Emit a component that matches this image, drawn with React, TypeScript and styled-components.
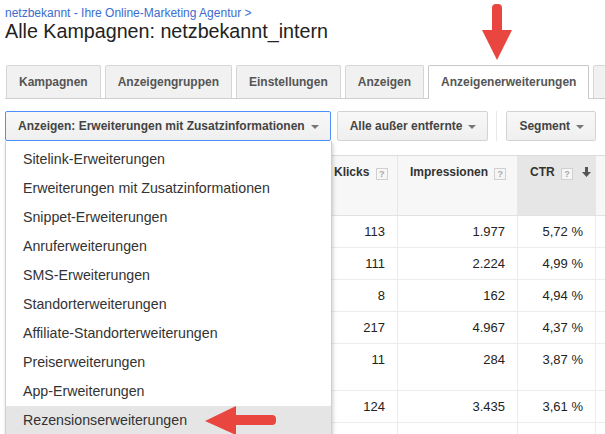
import React from "react";
import styled, { createGlobalStyle } from "styled-components";

const GlobalStyle = createGlobalStyle`
  html, body {
    margin: 0;
    padding: 0;
    background: #fff;
    overflow: hidden;
  }
  body {
    font-family: "Liberation Sans", Arial, sans-serif;
    color: #222;
  }
`;

const tabs = [
  "Kampagnen",
  "Anzeigengruppen",
  "Einstellungen",
  "Anzeigen",
  "Anzeigenerweiterungen",
];

const menuItems = [
  "Sitelink-Erweiterungen",
  "Erweiterungen mit Zusatzinformationen",
  "Snippet-Erweiterungen",
  "Anruferweiterungen",
  "SMS-Erweiterungen",
  "Standorterweiterungen",
  "Affiliate-Standorterweiterungen",
  "Preiserweiterungen",
  "App-Erweiterungen",
  "Rezensionserweiterungen",
];

type Row = { clicks: string; impressions: string; ctr: string; tall?: boolean };

const rows: Row[] = [
  { clicks: "113", impressions: "1.977", ctr: "5,72 %" },
  { clicks: "111", impressions: "2.224", ctr: "4,99 %" },
  { clicks: "8", impressions: "162", ctr: "4,94 %" },
  { clicks: "217", impressions: "4.967", ctr: "4,37 %" },
  { clicks: "11", impressions: "284", ctr: "3,87 %", tall: true },
  { clicks: "124", impressions: "3.435", ctr: "3,61 %" },
  { clicks: "84", impressions: "2.585", ctr: "3,33 %" },
];

const App = () => {
  return (
    <Page>
      <GlobalStyle />
      <Breadcrumb href="#">netzbekannt - Ihre Online-Marketing Agentur &gt;</Breadcrumb>
      <Title>Alle Kampagnen: netzbekannt_intern</Title>

      <DownArrow width="30" height="58" viewBox="0 0 30 58">
        <rect x="10" y="1" width="10" height="33" rx="4" fill="#e8463f" />
        <path d="M0 27 L30 27 L15 57 Z" fill="#e8463f" />
      </DownArrow>

      <TabBar>
        {tabs.map((t) => (
          <Tab key={t} $active={t === "Anzeigenerweiterungen"}>
            {t}
          </Tab>
        ))}
        <Tab $active={false} />
      </TabBar>

      <Toolbar>
        <DropButton $focused $gapRight={6}>
          Anzeigen: Erweiterungen mit Zusatzinformationen <Caret />
        </DropButton>
        <DropButton $gapRight={0}>
          Alle außer entfernte <Caret />
        </DropButton>
        <Divider />
        <DropButton $gapRight={0}>
          Segment <Caret />
        </DropButton>

        <Menu>
          {menuItems.map((m) => (
            <MenuItem key={m} $hover={m === "Rezensionserweiterungen"}>
              {m}
            </MenuItem>
          ))}
        </Menu>
      </Toolbar>

      <StatsTable>
        <colgroup>
          <col style={{ width: 316 }} />
          <col style={{ width: 76 }} />
          <col style={{ width: 120 }} />
          <col style={{ width: 78 }} />
          <col style={{ width: 80 }} />
        </colgroup>
        <thead>
          <tr>
            <HeadCell />
            <HeadCell>
              Klicks <Help>?</Help>
            </HeadCell>
            <HeadCell>
              Impressionen <Help>?</Help>
            </HeadCell>
            <HeadCell $sorted>
              CTR <Help>?</Help>
              <SortIcon width="9" height="10" viewBox="0 0 9 10">
                <path d="M3 0h3v5h3L4.5 10 0 5h3z" fill="#555" />
              </SortIcon>
            </HeadCell>
            <HeadCell />
          </tr>
        </thead>
        <tbody>
          {rows.map((r, i) => (
            <tr key={i}>
              <Cell $tall={r.tall} />
              <Cell $tall={r.tall}>{r.clicks}</Cell>
              <Cell $tall={r.tall}>{r.impressions}</Cell>
              <Cell $tall={r.tall}>{r.ctr}</Cell>
              <Cell $tall={r.tall} />
            </tr>
          ))}
        </tbody>
      </StatsTable>

      <LeftArrow width="72" height="30" viewBox="0 0 72 30">
        <rect x="24" y="10" width="47" height="10" rx="4" fill="#e8463f" />
        <path d="M0 16 L31 1 L31 30 Z" fill="#e8463f" />
      </LeftArrow>
    </Page>
  );
};

const Page = styled.div`
  position: relative;
  padding: 6px 0 0 5px;
  width: 700px;
`;

const Breadcrumb = styled.a`
  display: block;
  font-size: 12px;
  line-height: 14px;
  color: #3b6ccf;
  text-decoration: none;
`;

const Title = styled.h1`
  margin: 0;
  font-size: 19.7px;
  line-height: 22px;
  font-weight: 400;
  color: #222;
`;

const DownArrow = styled.svg`
  position: absolute;
  left: 482px;
  top: 3px;
  z-index: 5;
`;

const LeftArrow = styled.svg`
  position: absolute;
  left: 205px;
  top: 405px;
  z-index: 5;
`;

const TabBar = styled.div`
  display: flex;
  align-items: flex-end;
  gap: 4px;
  margin-top: 23px;
  padding-left: 1px;
  height: 33px;
  border-bottom: 1px solid #cfcfcf;
`;

const Tab = styled.div<{ $active: boolean }>`
  box-sizing: border-box;
  height: ${(p) => (p.$active ? 34 : 33)}px;
  min-width: 30px;
  margin-bottom: ${(p) => (p.$active ? -1 : 0)}px;
  display: flex;
  align-items: center;
  padding: 0 12px 1px;
  border: 1px solid ${(p) => (p.$active ? "#c8c8c8" : "#d6d6d6")};
  border-bottom: none;
  border-radius: 2px 2px 0 0;
  background: ${(p) => (p.$active ? "#fff" : "#f1f1f1")};
  font-size: 12px;
  font-weight: 700;
  color: #555;
  white-space: nowrap;
`;

const Toolbar = styled.div`
  position: relative;
  display: flex;
  align-items: center;
  margin-top: 12px;
  height: 30px;
`;

const DropButton = styled.div<{ $focused?: boolean; $gapRight: number }>`
  box-sizing: border-box;
  height: 30px;
  display: flex;
  align-items: center;
  gap: 6px;
  padding: 0 11px 0 12px;
  margin-right: ${(p) => p.$gapRight}px;
  border: 1px solid ${(p) => (p.$focused ? "#4d90fe" : "#d3d3d3")};
  border-radius: 2px;
  background: linear-gradient(#f8f8f8, #efefef);
  font-size: 12px;
  font-weight: 700;
  color: #444;
  white-space: nowrap;
`;

const Caret = styled.span`
  width: 0;
  height: 0;
  border-left: 4px solid transparent;
  border-right: 4px solid transparent;
  border-top: 4px solid #777;
  margin-top: 1px;
`;

const Divider = styled.div`
  width: 1px;
  height: 30px;
  background: #e8e8e8;
  margin: 0 9px 0 8px;
`;

const Menu = styled.div`
  position: absolute;
  top: 30px;
  left: 0;
  width: 327px;
  box-sizing: border-box;
  padding: 4px 0;
  background: #fff;
  border: 1px solid #cfcfcf;
  border-top: none;
  box-shadow: 1px 2px 4px rgba(0, 0, 0, 0.2);
  z-index: 2;
`;

const MenuItem = styled.div<{ $hover: boolean }>`
  height: 29px;
  line-height: 29px;
  padding: 0 17px;
  font-size: 14.2px;
  color: #333;
  background: ${(p) => (p.$hover ? "#e5e5e5" : "transparent")};
  white-space: nowrap;
`;

const StatsTable = styled.table`
  margin-top: 14px;
  border-collapse: collapse;
  table-layout: fixed;
  width: 670px;
`;

const HeadCell = styled.th<{ $sorted?: boolean }>`
  height: 50px;
  padding: 9px ${(p) => (p.$sorted ? 7 : 12)}px 0 12px;
  vertical-align: top;
  text-align: right;
  font-size: 12px;
  line-height: 14px;
  font-weight: 700;
  color: #333;
  white-space: nowrap;
  background: ${(p) => (p.$sorted ? "#e6e6e6" : "#f7f7f7")};
  border-top: 1px solid #dcdcdc;
  border-bottom: 1px solid #e2e2e2;
  border-left: 1px solid #e6e6e6;
`;

const Help = styled.span`
  display: inline-block;
  box-sizing: border-box;
  width: 12px;
  height: 12px;
  margin-left: 3px;
  border: 1px solid #d0d0d0;
  background: #f6f6f6;
  color: #aaa;
  font-size: 9px;
  line-height: 10px;
  text-align: center;
  vertical-align: -1px;
`;

const SortIcon = styled.svg`
  margin-left: 9px;
  vertical-align: -1px;
`;

const Cell = styled.td<{ $tall?: boolean }>`
  padding: 8px 12px ${(p) => (p.$tall ? 23 : 8)}px;
  vertical-align: top;
  text-align: right;
  font-size: 13px;
  line-height: 15px;
  color: #222;
  border-bottom: 1px solid #ececec;
  border-left: 1px solid #ececec;
`;

export default App;
